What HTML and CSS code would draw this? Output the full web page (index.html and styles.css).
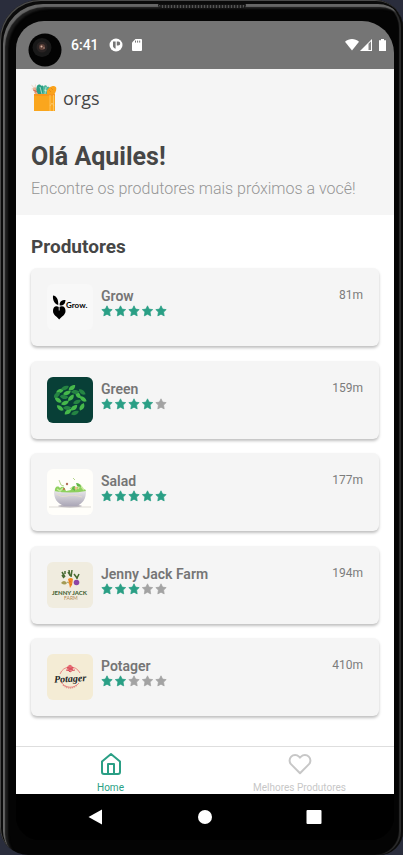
FILE: index.html
```html
<!DOCTYPE html>
<html lang="pt-BR">
<head>
<meta charset="utf-8">
<meta name="viewport" content="width=device-width, initial-scale=1">
<title>Orgs</title>
<link rel="stylesheet" href="styles.css">
</head>
<body>
<svg class="defs" aria-hidden="true">
  <symbol id="star" viewBox="0 0 12 12"><path d="M6 .8 7.6 4.1 11.2 4.6 8.6 7.1 9.2 10.9 6 9.2 2.8 10.9 3.4 7.1.8 4.6 4.4 4.1Z" stroke="currentColor" stroke-width=".7" stroke-linejoin="round" fill="currentColor"/></symbol>
  <defs><path id="leaf" d="M-3.800 1.500C-3-2 .5-2.800 3.800-2 3 1.800 0 3-3.800 1.500Z"/></defs>
</svg>
<div class="phone">
  <span class="speaker"></span>
  <div class="screen">
    <span class="camera"><svg viewBox="0 0 34 34"><circle cx="17" cy="17" r="16.5" fill="#030303"/><circle cx="14" cy="14.500" r="9.500" fill="#191919"/><circle cx="14" cy="14" r="5.500" fill="#292323"/><circle cx="14" cy="14" r="3" fill="#5b4039"/><circle cx="13.500" cy="13.500" r="1" fill="#dab6a5"/><circle cx="16" cy="15" r=".8" fill="#b28a7b"/></svg></span>
    <div class="status">
      <span class="clock">6:41</span>
      <svg class="app-dot" viewBox="0 0 14 14"><circle cx="7" cy="7" r="6.500" fill="#fff"/><path d="M4 3.500h2.600v7.200A4 4 0 0 1 4 8.500ZM7.800 3.500h1.400a2 2 0 0 1 0 4H7.800Z" fill="#757575"/></svg>
      <svg class="sd" viewBox="0 0 10 12"><path d="M3.500 0H9a1 1 0 0 1 1 1v10a1 1 0 0 1-1 1H1a1 1 0 0 1-1-1V3.500Z" fill="#fff"/><path d="M3.500 1.600v2M5.600 1.600v2M7.700 1.600v2" stroke="#757575"/></svg>
      <span class="signals">
        <svg class="wifi" viewBox="0 0 14 12"><path d="M0 2.800C4-.8 10-.8 14 2.800L7 11.500Z" fill="#fff"/></svg>
        <svg class="cell" viewBox="0 0 12 12"><path d="M12 0v12H0Z" fill="#fff"/><path d="M8.500 4.800 11 2.300V11H8.500Z" fill="#858585"/></svg>
        <svg class="battery" viewBox="0 0 7 12"><path d="M2 0h3v1.200h2V12H0V1.200h2Z" fill="#fff"/></svg>
      </span>
    </div>
    <header class="top">
      <div class="brand">
        <svg viewBox="0 0 26 28" aria-hidden="true">
          <path d="M4 10 1.500 4l3-1 4 7Z" fill="#e9a888"/><path d="M.5.8 3 4M4.500.5 4 4M.5 5l3 0" stroke="#e8d0bd" stroke-width=".8"/><path d="m2 6 3 1M4 8l3-1" stroke="#cf5c43" stroke-width=".7"/>
          <path d="M6 2c1-2 4-2 4 0 2-1 3 0 2.500 2L14 10H7C5 7 5 4 6 2Z" fill="#2a9f85"/>
          <path d="M12 4c0-3 4-4 4-1 3-1 4 2 2 4l-1 4h-5Z" fill="#4db69a"/><path d="m9 3 2 7M15 3l-1 7M13 6l3 1" stroke="#d8f0df" stroke-width=".7"/>
          <path d="M16 10c-1-5 3-8 7-8 4 1 2 5 0 9Z" fill="#faa21b"/><path d="m20 4 2 2M18 6l2 2" stroke="#e48713" stroke-width=".8"/>
          <path d="M3 10h21v17H3Z" fill="#faa61d"/><path d="M3 10h21v2H3Z" fill="#f7981d"/><path d="M19 11v16M22.500 11v16M19 22l2-3 2 3" fill="none" stroke="#ffcf78" stroke-width=".7"/>
        </svg>
        <span>orgs</span>
      </div>
      <h1>Olá Aquiles!</h1>
      <p>Encontre os produtores mais próximos a você!</p>
    </header>
    <main>
      <h2>Produtores</h2>
      <ul class="list">
        <li class="card">
          <svg class="thumb" viewBox="0 0 46 46" aria-hidden="true"><rect width="46" height="46" fill="#f8f8f8"/><path d="M6 11.500C9.500 12 11.500 15 11.300 21 7.500 20 5.500 16 6 11.500ZM12.500 21.500c0-4 2-5.500 6-5.500-.3 4-2 5.700-6 5.500Z"/><path d="M12 23c4-2 6.500 0 6.500 4 0 4-4 5.500-6.300 8.500C10 32.500 6 31 6 27c0-4 2.500-6 6-4Z"/><path d="M12.200 20.500v6" stroke="#f8f8f8" stroke-width=".8"/><text x="19" y="24" class="grow-word">Grow.</text></svg>
          <div class="info"><h3>Grow</h3><svg class="stars" viewBox="0 0 66 12" role="img" aria-label="5 de 5"><use href="#star" width="12" height="12"/><use href="#star" x="13.500" width="12" height="12"/><use href="#star" x="27" width="12" height="12"/><use href="#star" x="40.500" width="12" height="12"/><use href="#star" x="54" width="12" height="12"/></svg></div>
          <span class="distance">81m</span>
        </li>
        <li class="card">
          <svg class="thumb" viewBox="0 0 46 46" aria-hidden="true"><rect width="46" height="46" fill="#083f37"/>
            <g fill="#46b84b"><use href="#leaf" transform="translate(25 11) rotate(-15)"/><use href="#leaf" transform="translate(13 14)"/><use href="#leaf" transform="translate(20 16)"/><use href="#leaf" transform="translate(11 23) rotate(60)"/><use href="#leaf" transform="translate(18 26)"/><use href="#leaf" transform="translate(24 21) rotate(-25)"/><use href="#leaf" transform="translate(31 18) rotate(75)"/><use href="#leaf" transform="translate(35 30) rotate(-40)"/><use href="#leaf" transform="translate(27 31) rotate(-15)"/><use href="#leaf" transform="translate(21 35) rotate(-15)"/><use href="#leaf" transform="translate(13 31) rotate(60)"/><use href="#leaf" transform="translate(36 22) rotate(60)"/></g>
            <g fill="#258443"><use href="#leaf" transform="translate(17 20) rotate(30)"/><use href="#leaf" transform="translate(28 15) rotate(20)"/><use href="#leaf" transform="translate(30 25)"/><use href="#leaf" transform="translate(20 31) rotate(20)"/><use href="#leaf" transform="translate(28 36)"/><use href="#leaf" transform="translate(35 15) rotate(60)"/><use href="#leaf" transform="translate(18 11)"/><use href="#leaf" transform="translate(10 18) rotate(-20)"/></g>
          </svg>
          <div class="info"><h3>Green</h3><svg class="stars" viewBox="0 0 66 12" role="img" aria-label="4 de 5"><use href="#star" width="12" height="12"/><use href="#star" x="13.500" width="12" height="12"/><use href="#star" x="27" width="12" height="12"/><use href="#star" x="40.500" width="12" height="12"/><use class="off" href="#star" x="54" width="12" height="12"/></svg></div>
          <span class="distance">159m</span>
        </li>
        <li class="card">
          <svg class="thumb" viewBox="0 0 46 46" aria-hidden="true"><defs><linearGradient id="bowl" x2="0" y2="1"><stop stop-color="#e7e5e8"/><stop offset="1" stop-color="#aaa6b6"/></linearGradient></defs><rect width="46" height="46" fill="#fffefa"/><path d="M2 38h42" stroke="#dedbd5"/><ellipse cx="23" cy="37" rx="12" ry="1.500" fill="#bbb6bd"/>
            <path d="M8 23c-1-5 3-7 5-4 3-3 5 0 6 3l5-1c0-4 4-5 5-2 3-4 7-1 7 1 4 0 3 3 2 4H9Z" fill="#8ed05e"/><path d="m10 20 3 2 3-3M23 20l3-2 3 3M31 20l2-4 4 5" fill="none" stroke="#c9ea9d" stroke-width="1.500"/><path d="M25 20c0-3 3-4 4-1l-1 3ZM29 14c3 0 5 2 5 4l-4-1Z" fill="#62b847"/><path d="m12 11 2 5 3 1M26 9l2 2" stroke="#b6d78d" fill="none"/><circle cx="20" cy="15" r="1.200" fill="#b17059"/><circle cx="17" cy="20" r="1" fill="#c66551"/><circle cx="29" cy="19" r="1.500" fill="#efbd89"/>
            <path d="M7 22q16 3 32 0c0 8-3 12-9 15H17C10 34 7 30 7 22Z" fill="url(#bowl)"/><path d="M9 25q6 4 11 2t15 1" stroke="#e5dccd" fill="none"/></svg>
          <div class="info"><h3>Salad</h3><svg class="stars" viewBox="0 0 66 12" role="img" aria-label="5 de 5"><use href="#star" width="12" height="12"/><use href="#star" x="13.500" width="12" height="12"/><use href="#star" x="27" width="12" height="12"/><use href="#star" x="40.500" width="12" height="12"/><use href="#star" x="54" width="12" height="12"/></svg></div>
          <span class="distance">177m</span>
        </li>
        <li class="card">
          <svg class="thumb" viewBox="0 0 46 46" aria-hidden="true"><rect width="46" height="46" fill="#f0ecdf"/>
            <path d="m15 10 3 5M18 9l0 3M15 13l2 3M22 8l1 6M25 8l-1 7M21 10l2 3M27 12l3 4 2-4M30 17v-2" stroke="#476a32" stroke-width="1.500" fill="none"/><path d="M21 17q3-2 5 0l-1 6-2 3Z" fill="#f18a25"/><path d="m22 19 2 1M23 23l2-1" stroke="#cf681d" stroke-width=".6"/><circle cx="29.500" cy="20.500" r="2.800" fill="#8d45a5"/><path d="M14 21q3-4 6 0-2 3-6 0Z" fill="#a39a53"/><path d="m20 20 2 1" stroke="#a39a53"/><text x="5" y="33" class="jenny-word">JENNY JACK</text><text x="17" y="38" class="farm-word">FARM</text></svg>
          <div class="info"><h3>Jenny Jack Farm</h3><svg class="stars" viewBox="0 0 66 12" role="img" aria-label="3 de 5"><use href="#star" width="12" height="12"/><use href="#star" x="13.500" width="12" height="12"/><use href="#star" x="27" width="12" height="12"/><use class="off" href="#star" x="40.500" width="12" height="12"/><use class="off" href="#star" x="54" width="12" height="12"/></svg></div>
          <span class="distance">194m</span>
        </li>
        <li class="card">
          <svg class="thumb" viewBox="0 0 46 46" aria-hidden="true"><rect width="46" height="46" fill="#f4ecd5"/><path d="M13 20a11 11 0 0 1 20-1M14 28a11 11 0 0 0 18 1" fill="none" stroke="#e86e70" stroke-width=".8"/><path d="M16 31q7 6 14 0" fill="none" stroke="#dc8580" stroke-dasharray="1 1" stroke-width="1.500"/><path d="M23 17c-4-1-4-5-2-4 0-3 4-3 4 0 3-1 2 3-2 4Z" fill="#e66a73"/><path d="M19 16q3 0 4 2 2-2 5-2M20 13l6 3M26 13l-5 4" stroke="#d84e5a" fill="none"/><text x="7" y="28" class="potager-word" transform="rotate(-3 23 24)">Potager</text></svg>
          <div class="info"><h3>Potager</h3><svg class="stars" viewBox="0 0 66 12" role="img" aria-label="2 de 5"><use href="#star" width="12" height="12"/><use href="#star" x="13.500" width="12" height="12"/><use class="off" href="#star" x="27" width="12" height="12"/><use class="off" href="#star" x="40.500" width="12" height="12"/><use class="off" href="#star" x="54" width="12" height="12"/></svg></div>
          <span class="distance">410m</span>
        </li>
      </ul>
    </main>
    <nav class="tabs">
      <a class="tab active" href="#home"><svg viewBox="0 0 24 24"><path d="M3 9.500 12 2l9 7.500V20a2 2 0 0 1-2 2H5a2 2 0 0 1-2-2ZM9 22V12h6v10"/></svg><span>Home</span></a>
      <a class="tab" href="#melhores"><svg viewBox="0 0 24 24"><path d="M20.800 4.600a5.500 5.500 0 0 0-7.800 0L12 5.700l-1-1.100a5.500 5.500 0 0 0-7.800 7.800L12 21.200l8.800-8.800a5.500 5.500 0 0 0 0-7.800Z"/></svg><span>Melhores Produtores</span></a>
    </nav>
    <div class="system">
      <button aria-label="Voltar"><svg viewBox="0 0 24 24"><path d="M18 4.500v15L4.500 12Z"/></svg></button>
      <button aria-label="Início"><svg viewBox="0 0 24 24"><circle cx="12" cy="12" r="7"/></svg></button>
      <button aria-label="Recentes"><svg viewBox="0 0 24 24"><rect x="4.500" y="5" width="15" height="14" rx="1"/></svg></button>
    </div>
  </div>
</div>
</body>
</html>
```
FILE: styles.css
```css
* { box-sizing: border-box; }
body {
  margin: 0;
  background: #2a2d3c;
  font-family: Roboto, "Liberation Sans", sans-serif;
  color: #464646;
}
h1, h2, h3, p, ul { margin: 0; padding: 0; }
svg { display: block; flex: none; }
.defs { position: absolute; width: 0; height: 0; }

.phone {
  position: relative;
  display: flex;
  min-height: 100vh;
  padding: 21px 9px 15px 16px;
  background: #040404;
  border-radius: 40px 28px 24px 28px;
  box-shadow:
    inset 1px 1px 0 0 #4a4a4a,
    inset 3px 4px 0 0 #0b0b0b,
    inset -2px 0 0 0 #0b0b0b,
    inset 5px 7px 1px 0 #666,
    inset -4px 0 1px 0 #2c2c2c,
    inset 8px 9px 2px 0 #1d1d1d;
}
.speaker {
  position: absolute;
  top: 4px;
  left: 50%;
  width: 88px;
  height: 5px;
  margin-left: -44px;
  border: 1px solid #111;
  border-radius: 0 0 4px 4px;
  background: repeating-linear-gradient(90deg, #555 0 1px, #252525 1px 3px);
}
.screen {
  position: relative;
  display: flex;
  flex: 1;
  flex-direction: column;
  min-width: 0;
  overflow: hidden;
  border-radius: 28px 32px 24px 24px;
  background: #000;
}
.camera { position: absolute; top: 12px; left: 12px; }
.camera svg { width: 34px; height: 34px; }

.status {
  display: flex;
  align-items: center;
  height: 48px;
  padding: 0 8px 0 55px;
  background: #757575;
  color: #fff;
}
.clock { font-size: 14px; font-weight: 500; line-height: 16px; }
.app-dot { width: 14px; height: 14px; margin-left: 10px; }
.sd { width: 10px; height: 12px; margin-left: 9px; }
.signals { display: flex; align-items: center; margin-left: auto; }
.wifi { width: 14px; height: 12px; }
.cell { width: 12px; height: 12px; margin-left: 1px; }
.battery { width: 7px; height: 12px; margin-left: 7px; }

.top { height: 146px; padding: 15px; background: #f5f5f5; }
.brand {
  display: flex;
  align-items: center;
  gap: 6px;
  font: 500 18px/26px "Open Sans", sans-serif;
}
.brand svg { width: 26px; height: 28px; }
h1 { margin-top: 27px; font-size: 25px; line-height: 36px; }
.top p { margin-top: 4px; font-size: 16px; font-weight: 300; line-height: 20px; color: #969696; }

main { display: flex; flex: 1; flex-direction: column; padding: 20px 15px 30px; background: #fff; }
h2 { font-size: 19px; line-height: 24px; }
.list {
  display: flex;
  flex: 1;
  flex-direction: column;
  justify-content: space-between;
  margin-top: 9px;
  list-style: none;
}
.card {
  display: flex;
  height: 78px;
  padding: 16px;
  border-radius: 6px;
  background: #f5f5f5;
  box-shadow: 0 2px 3px rgba(0, 0, 0, 0.25);
}
.thumb { width: 46px; height: 46px; border-radius: 6px; }
.info { flex: 1; margin-left: 8px; padding-top: 4px; }
h3 { font-size: 14px; font-weight: 600; line-height: 17px; color: #757575; }
.stars { width: 66px; height: 12px; color: #2a9f85; }
.off { color: #a3a3a3; }
.distance { padding-top: 3px; font-size: 12px; line-height: 16px; color: #7c7c7c; }
.grow-word { font: 700 8px Lato, sans-serif; }
.jenny-word { font: 900 6px Lato, sans-serif; fill: #496638; }
.farm-word { font: 5px Lato, sans-serif; fill: #b08a55; }
.potager-word { font: italic 700 10px "Liberation Serif", serif; fill: #20241f; }

.tabs {
  display: flex;
  height: 48px;
  border-top: 1px solid #dedede;
  background: #fff;
}
.tab {
  display: flex;
  flex: 1;
  flex-direction: column;
  align-items: center;
  gap: 6px;
  padding-top: 5px;
  font-size: 10px;
  line-height: 12px;
  color: #c7c7c7;
  text-decoration: none;
}
.tab svg {
  width: 24px;
  height: 24px;
  fill: none;
  stroke: currentColor;
  stroke-width: 2;
  stroke-linecap: round;
  stroke-linejoin: round;
}
.tab.active { color: #2a9f85; }

.system {
  display: flex;
  justify-content: center;
  gap: 85px;
  height: 46px;
  background: #000;
}
.system button { padding: 0; border: 0; background: none; }
.system svg { width: 24px; height: 24px; fill: #fff; }
```
